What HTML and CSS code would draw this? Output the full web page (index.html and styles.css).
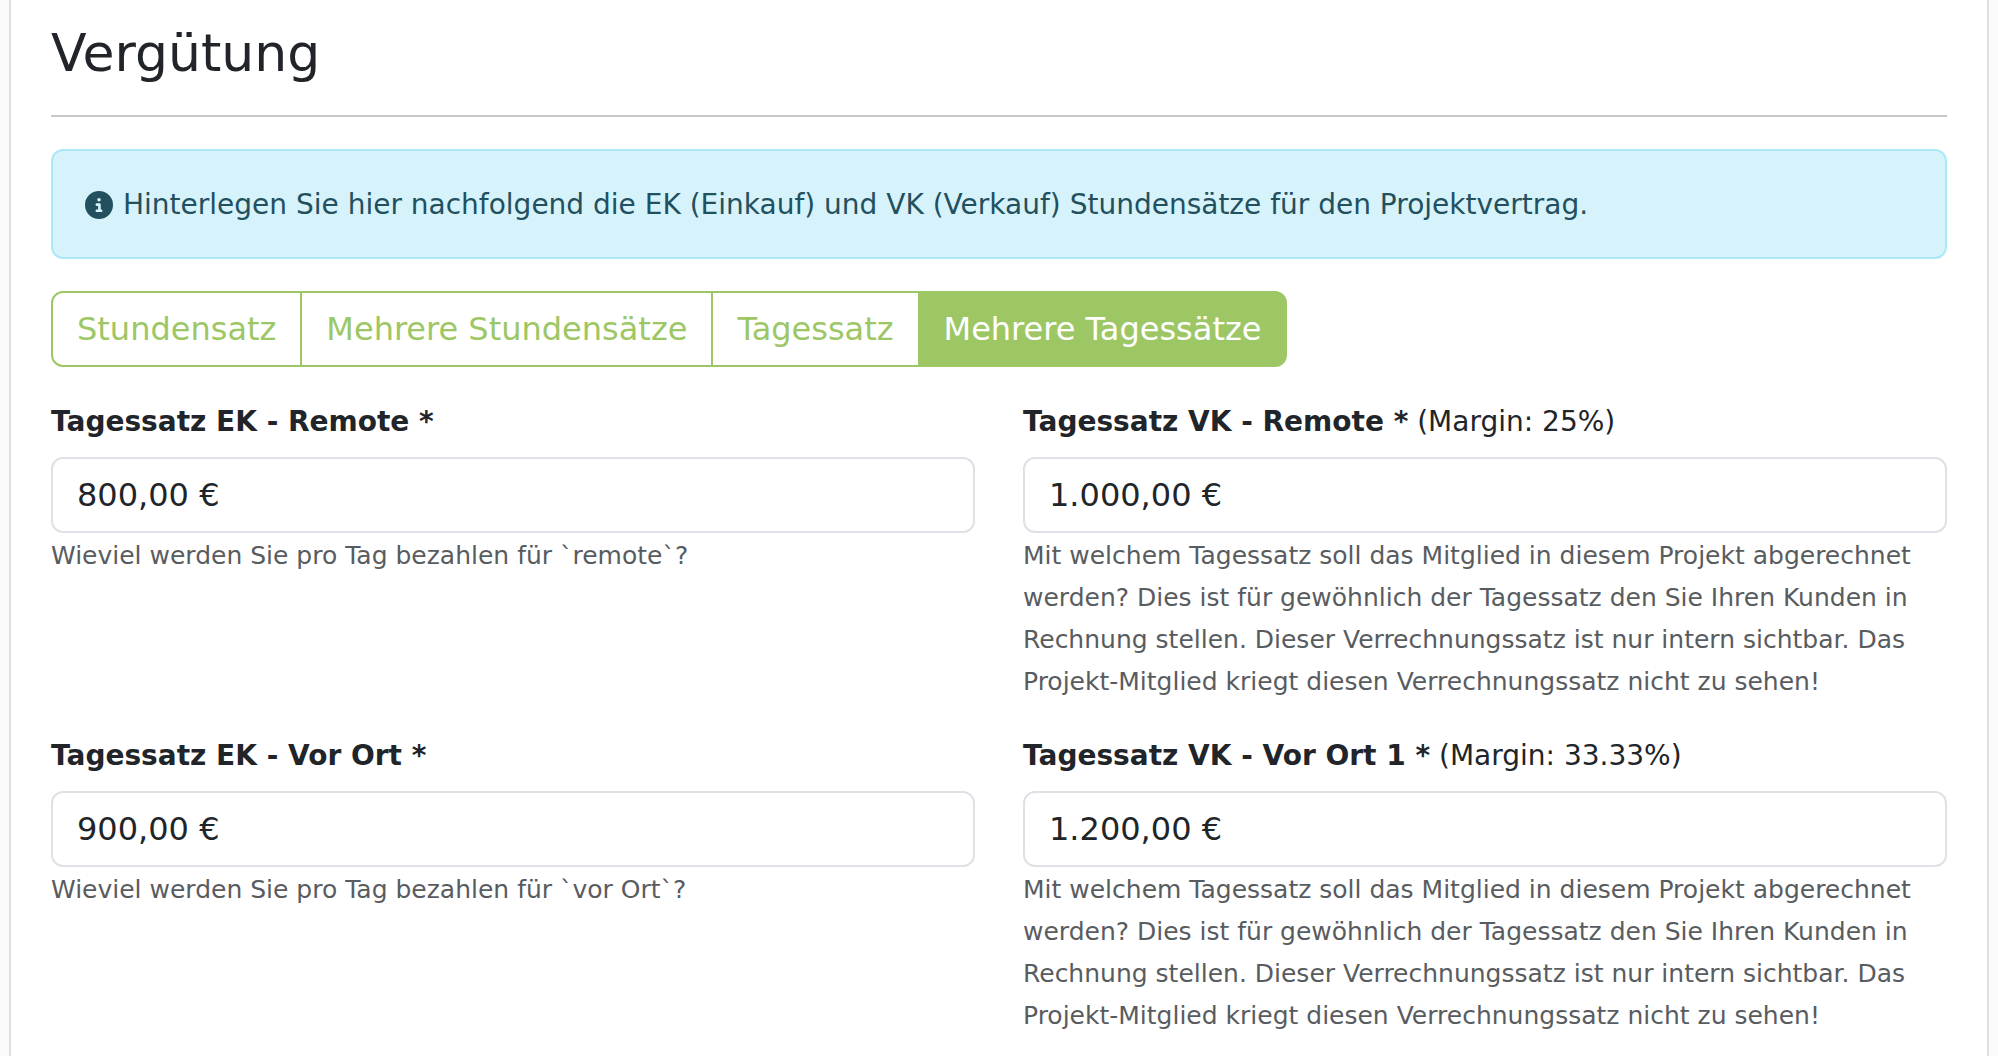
FILE: index.html
```html
<!DOCTYPE html>
<html lang="de">
<head>
  <meta charset="UTF-8" />
  <title>Vergütung</title>
  <link rel="stylesheet" href="styles.css">
</head>
<body>

  <main class="card">
    <h1>Vergütung</h1>
    <hr />

    <div class="alert">
      <svg class="icon" viewBox="0 0 512 512" aria-hidden="true">
        <path fill="currentColor" d="M256 512A256 256 0 1 0 256 0a256 256 0 1 0 0 512zM216 336h24V272H216c-13.300 0-24-10.700-24-24s10.700-24 24-24h48c13.300 0 24 10.700 24 24v88h8c13.300 0 24 10.700 24 24s-10.700 24-24 24H216c-13.300 0-24-10.700-24-24s10.700-24 24-24zm40-208a32 32 0 1 1 0 64 32 32 0 1 1 0-64z"/>
      </svg>
      <span>Hinterlegen Sie hier nachfolgend die EK (Einkauf) und VK (Verkauf) Stundensätze für den Projektvertrag.</span>
    </div>

    <div class="btn-group">
      <button type="button">Stundensatz</button>
      <button type="button">Mehrere Stundensätze</button>
      <button type="button">Tagessatz</button>
      <button type="button" class="active">Mehrere Tagessätze</button>
    </div>

    <form class="grid">
      <div class="field">
        <label for="ekRemote"><b>Tagessatz EK - Remote *</b></label>
        <input type="text" id="ekRemote" value="800,00 €" />
        <p class="help">Wieviel werden Sie pro Tag bezahlen für `remote`?</p>
      </div>
      <div class="field">
        <label for="vkRemote"><b>Tagessatz VK - Remote *</b> (Margin: 25%)</label>
        <input type="text" id="vkRemote" value="1.000,00 €" />
        <p class="help">Mit welchem Tagessatz soll das Mitglied in diesem Projekt abgerechnet werden? Dies ist für gewöhnlich der Tagessatz den Sie Ihren Kunden in Rechnung stellen. Dieser Verrechnungssatz ist nur intern sichtbar. Das Projekt-Mitglied kriegt diesen Verrechnungssatz nicht zu sehen!</p>
      </div>
      <div class="field">
        <label for="ekVorOrt"><b>Tagessatz EK - Vor Ort *</b></label>
        <input type="text" id="ekVorOrt" value="900,00 €" />
        <p class="help">Wieviel werden Sie pro Tag bezahlen für `vor Ort`?</p>
      </div>
      <div class="field">
        <label for="vkVorOrt"><b>Tagessatz VK - Vor Ort 1 *</b> (Margin: 33.33%)</label>
        <input type="text" id="vkVorOrt" value="1.200,00 €" />
        <p class="help">Mit welchem Tagessatz soll das Mitglied in diesem Projekt abgerechnet werden? Dies ist für gewöhnlich der Tagessatz den Sie Ihren Kunden in Rechnung stellen. Dieser Verrechnungssatz ist nur intern sichtbar. Das Projekt-Mitglied kriegt diesen Verrechnungssatz nicht zu sehen!</p>
      </div>
    </form>
  </main>

</body>
</html>
```

FILE: styles.css
```css
* { box-sizing: border-box; }
body { background: #fafafa; color: #212529; font-family: Verdana, "DejaVu Sans", sans-serif; font-size: 28px; line-height: 42px; margin: 0; }
.card { background: #fff; margin: 0 9px; padding: 21px 40px 24px; border: solid #dedede; border-width: 0 2px; }
h1 { font-size: 52px; font-weight: normal; line-height: 64px; margin: 0 0 30px; }
hr { border: 0; border-top: 2px solid #c8c8c8; margin: 0 0 32px; }
.alert { background: #d6f3fb; color: #22505f; border: 2px solid #ade8f7; border-radius: 12px; padding: 33px 32px 31px; margin-bottom: 32px; display: flex; align-items: center; gap: 10px; }
.icon { width: 28px; height: 28px; flex: none; }
.btn-group { display: flex; margin-bottom: 34px; }
.btn-group button { background: #fff; color: #9dc765; border: 2px solid #9dc765; padding: 12px 24px; font: inherit; font-size: 32px; line-height: 48px; cursor: pointer; }
.btn-group button + button { margin-left: -2px; }
.btn-group button:first-child { border-radius: 12px 0 0 12px; }
.btn-group button:last-child { border-radius: 0 12px 12px 0; }
.btn-group .active { background: #9dc765; color: #fff; }
.grid { display: grid; grid-template-columns: 1fr 1fr; gap: 32px 48px; }
label { display: block; margin-bottom: 14px; }
input { display: block; width: 100%; background: #fff; color: #212529; border: 2px solid #dee2e6; border-radius: 12px; padding: 12px 24px; font: inherit; font-size: 32px; line-height: 48px; height: 76px; }
.help { color: #595c5f; font-size: 25px; margin: 2px 0 0; }
```
